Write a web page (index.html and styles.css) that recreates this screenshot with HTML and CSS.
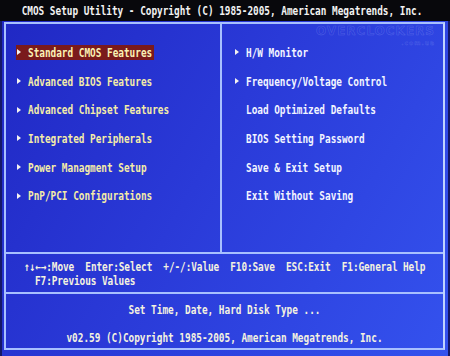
FILE: index.html
```html
<!DOCTYPE html>
<html>
  <head>
    <meta charset="UTF-8" />
    <title>CMOS Setup Utility</title>
    <link rel="stylesheet" href="styles.css">
  </head>
  <body>
    <div class="header"><span class="txt">CMOS Setup Utility - Copyright (C) 1985-2005, American Megatrends, Inc.</span></div>
    <div class="screen">
      <div class="frame">
        <div class="main">
          <ul class="menu menu-left">
            <li><span class="item selected"><i class="arrow"></i><span class="txt">Standard CMOS Features</span></span></li>
            <li><span class="item"><i class="arrow"></i><span class="txt">Advanced BIOS Features</span></span></li>
            <li><span class="item"><i class="arrow"></i><span class="txt">Advanced Chipset Features</span></span></li>
            <li><span class="item"><i class="arrow"></i><span class="txt">Integrated Peripherals</span></span></li>
            <li><span class="item"><i class="arrow"></i><span class="txt">Power Managment Setup</span></span></li>
            <li><span class="item"><i class="arrow"></i><span class="txt">PnP/PCI Configurations</span></span></li>
          </ul>
          <ul class="menu menu-right">
            <li><span class="item"><i class="arrow"></i><span class="txt">H/W Monitor</span></span></li>
            <li><span class="item"><i class="arrow"></i><span class="txt">Frequency/Voltage Control</span></span></li>
            <li><span class="item"><i class="arrow blank"></i><span class="txt">Load Optimized Defaults</span></span></li>
            <li><span class="item"><i class="arrow blank"></i><span class="txt">BIOS Setting Password</span></span></li>
            <li><span class="item"><i class="arrow blank"></i><span class="txt">Save &amp; Exit Setup</span></span></li>
            <li><span class="item"><i class="arrow blank"></i><span class="txt">Exit Without Saving</span></span></li>
          </ul>
          <div class="watermark">OVERCLOCKERS<span>.com.ua</span></div>
        </div>
        <div class="help">
          <div class="line"><span class="txt">↑↓←→:Move  Enter:Select  +/-/:Value  F10:Save  ESC:Exit  F1:General Help</span></div>
          <div class="line indent"><span class="txt">F7:Previous Values</span></div>
        </div>
        <div class="footer">
          <div class="line"><span class="txt">Set Time, Date, Hard Disk Type ...</span></div>
          <div class="line"><span class="txt">v02.59 (C)Copyright 1985-2005, American Megatrends, Inc.</span></div>
        </div>
      </div>
    </div>
  </body>
</html>
```
FILE: styles.css
```css
body {
    margin: 0;
    padding: 0;
    width: 450px;
    height: 356px;
    overflow: hidden;
    font-family: "DejaVu Sans Mono", "Liberation Mono", monospace;
    font-weight: bold;
    font-size: 9.4px;
    background-color: #2232c8;
    color: #f4f2e0;
}

.txt {
    display: inline-block;
    white-space: pre;
    transform: scaleY(1.3);
}

.header {
    height: 21px;
    line-height: 21px;
    text-align: center;
    background-color: #08080c;
    color: #f2f2f2;
    padding-right: 6px;
}

.screen {
    height: 335px;
    padding: 1px 3px 0 4px;
    box-sizing: border-box;
    background: linear-gradient(120deg, #2028c4 0%, #2a3ad8 45%, #3452ee 100%);
    border-left: 2px solid #141868;
    border-right: 2px solid #141868;
    width: 450px;
}

.frame {
    border: 2px solid #a8c0ff;
    border-right-color: #c0d4ff;
    margin-left: -2px;
}

.main {
    position: relative;
    display: grid;
    grid-template-columns: 216px 1fr;
    height: 228px;
    border-bottom: 2px solid #a8c0ff;
}

.menu {
    list-style: none;
    margin: 0;
    padding: 14px 0 0 10px;
}

.menu-left {
    border-right: 2px solid #a8c0ff;
    color: #f4eca8;
}

.menu-right {
    padding-left: 12px;
    color: #f2f4ff;
}

.menu li {
    height: 28.7px;
    display: flex;
    align-items: center;
}

.item {
    display: inline-flex;
    align-items: center;
    height: 15px;
    padding: 0 2px 0 1px;
}

.item.selected {
    background-color: #7a1a1c;
    color: #fbf2b4;
}

.arrow {
    display: inline-block;
    width: 0;
    height: 0;
    border-left: 4px solid #f4f2f0;
    border-top: 3px solid transparent;
    border-bottom: 3px solid transparent;
    margin-right: 7px;
}

.arrow.blank {
    border-left-color: transparent;
}

.watermark {
    position: absolute;
    right: 8px;
    top: 0;
    font-family: "DejaVu Sans", sans-serif;
    font-size: 12px;
    letter-spacing: 1px;
    color: transparent;
    -webkit-text-stroke: 0.6px rgba(190, 200, 255, 0.22);
    line-height: 15px;
    text-align: right;
}

.watermark span {
    display: block;
    font-size: 6px;
    line-height: 7px;
    -webkit-text-stroke: 0.4px rgba(190, 200, 255, 0.22);
}

.help {
    height: 40px;
    box-sizing: border-box;
    padding: 5.5px 0 0 18px;
    border-bottom: 2px solid #a8c0ff;
}

.help .txt {
    letter-spacing: -0.07px;
}

.line {
    height: 14.3px;
    line-height: 14.3px;
}

.indent {
    padding-left: 11px;
}

.footer {
    height: 54px;
    box-sizing: border-box;
    padding-top: 9px;
    text-align: center;
}

.footer .line + .line {
    margin-top: 14px;
}
```
